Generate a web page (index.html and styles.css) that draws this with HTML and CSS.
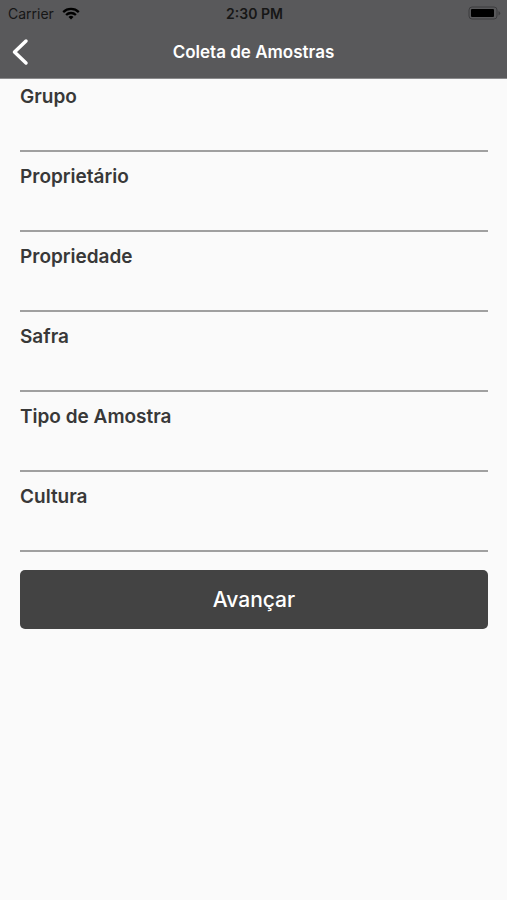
FILE: index.html
```html
<!DOCTYPE html>
<html lang="pt-BR">
<head>
<meta charset="UTF-8">
<meta name="viewport" content="width=device-width, initial-scale=1.0">
<title>Coleta de Amostras</title>
<link rel="stylesheet" href="styles.css">
</head>
<body>

<header class="header">
  <div class="status-bar">
    <div class="carrier">
      <span>Carrier</span>
      <svg width="18" height="13" viewBox="0 0 18 13" fill="none" stroke="#000" stroke-width="2.3" aria-hidden="true">
        <path d="M1.2 5.1a11.2 11.2 0 0 1 15.6 0"/>
        <path d="M4.1 8a7 7 0 0 1 9.800 0"/>
        <path d="M9 12.4 6.5 9.9a3.6 3.6 0 0 1 5 0z" fill="#000" stroke="none"/>
      </svg>
    </div>
    <span class="clock">2:30 PM</span>
    <svg class="battery" width="33" height="15" viewBox="0 0 33 15" aria-hidden="true">
      <rect x="1" y="1" width="28" height="12" rx="3" fill="none" stroke="#3c3c3e"/>
      <rect x="3" y="3" width="23" height="8" rx="1"/>
      <path d="M30.5 5v4.4q1.7-.7 1.7-2.2t-1.7-2.2z" fill="#3c3c3e"/>
    </svg>
  </div>
  <div class="nav-bar">
    <button class="back" type="button" aria-label="Voltar">
      <svg width="18" height="28" viewBox="0 0 18 28" fill="none" stroke="#fff" stroke-width="3.5" stroke-linecap="round" stroke-linejoin="round" aria-hidden="true">
        <path d="M14 3 2.5 14 14 25"/>
      </svg>
    </button>
    <h1 class="title">Coleta de Amostras</h1>
  </div>
</header>

<form class="form">
  <div class="field">
    <label for="grupo">Grupo</label>
    <input type="text" id="grupo">
  </div>
  <div class="field">
    <label for="proprietario">Proprietário</label>
    <input type="text" id="proprietario">
  </div>
  <div class="field">
    <label for="propriedade">Propriedade</label>
    <input type="text" id="propriedade">
  </div>
  <div class="field">
    <label for="safra">Safra</label>
    <input type="text" id="safra">
  </div>
  <div class="field">
    <label for="tipoAmostra">Tipo de Amostra</label>
    <input type="text" id="tipoAmostra">
  </div>
  <div class="field">
    <label for="cultura">Cultura</label>
    <input type="text" id="cultura">
  </div>
  <button class="submit" type="button">Avançar</button>
</form>

</body>
</html>
```
FILE: styles.css
```css
* {
  box-sizing: border-box;
}
body {
  margin: 0;
  min-height: 100vh;
  font-family: Inter, "Liberation Sans", sans-serif;
  background: #fafafa;
  color: #383838;
}
button, input {
  font-family: inherit;
}
.header {
  background: #59595b;
  border-bottom: 1px solid #8a8a8c;
}
.status-bar {
  display: grid;
  grid-template-columns: 1fr auto 1fr;
  align-items: center;
  height: 27px;
  padding: 0 6px 0 8px;
  font-size: 14px;
  color: #161616;
}
.carrier {
  display: flex;
  align-items: center;
  gap: 8px;
}
.clock {
  font-weight: 600;
}
.battery {
  justify-self: end;
}
.nav-bar {
  display: grid;
  grid-template-columns: 40px 1fr 40px;
  align-items: center;
  height: 51px;
  padding-bottom: 2px;
}
.back {
  display: flex;
  padding: 0 0 0 12px;
  border: 0;
  background: none;
  cursor: pointer;
}
.title {
  margin: 0;
  font-size: 17px;
  font-weight: 600;
  text-align: center;
  color: #fff;
}
.form {
  padding: 6px 19px 20px 20px;
}
.field {
  display: flex;
  flex-direction: column;
  margin-bottom: 13px;
}
.field label {
  font-size: 19px;
  font-weight: 600;
  line-height: 24px;
}
.field input {
  width: 100%;
  height: 43px;
  padding: 0;
  border: 0;
  border-bottom: 2px solid #a0a0a0;
  border-radius: 0;
  outline: 0;
  background: none;
  font-size: 18px;
}
.submit {
  width: 100%;
  height: 59px;
  margin-top: 5px;
  border: 0;
  border-radius: 5px;
  background: #434343;
  color: #fff;
  font-size: 21px;
  font-weight: 500;
  cursor: pointer;
}
```
